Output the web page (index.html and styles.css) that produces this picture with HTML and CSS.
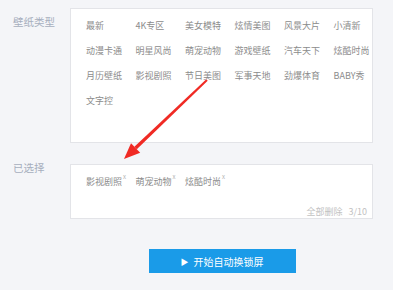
FILE: index.html
```html
<!DOCTYPE html>
<html>
<head>
    <meta charset="UTF-8">
    <title>壁纸设置</title>
    <link rel="stylesheet" href="styles.css">
</head>
<body>
    <div class="page">
        <div class="row">
            <div class="label label-top">壁纸类型</div>
            <div class="box type-box">
                <div class="grid">
                    <span>最新</span><span>4K专区</span><span>美女模特</span><span>炫情美图</span><span>风景大片</span><span>小清新</span>
                    <span>动漫卡通</span><span>明星风尚</span><span>萌宠动物</span><span>游戏壁纸</span><span>汽车天下</span><span>炫酷时尚</span>
                    <span>月历壁纸</span><span>影视剧照</span><span>节日美图</span><span>军事天地</span><span>劲爆体育</span><span>BABY秀</span>
                    <span>文字控</span>
                </div>
            </div>
        </div>

        <div class="row row-selected">
            <div class="label label-selected">已选择</div>
            <div class="box selected-box">
                <div class="grid">
                    <span>影视剧照<sup class="del">x</sup></span>
                    <span>萌宠动物<sup class="del">x</sup></span>
                    <span>炫酷时尚<sup class="del">x</sup></span>
                </div>
                <div class="selected-footer">
                    <span>全部删除</span>
                    <span>3/10</span>
                </div>
            </div>
        </div>

        <div class="actions">
            <button class="start-btn"><span class="play">&#9654;</span>开始自动换锁屏</button>
        </div>
    </div>

    <!-- annotation arrow -->
    <svg class="arrow" width="393" height="290" viewBox="0 0 393 290">
        <polygon points="206.3,79.3 207.7,80.7 136.8,149.3 134.4,146.7" fill="#f02a24"/>
        <polygon points="124,159 140.2,152.8 131,143.2" fill="#f02a24"/>
    </svg>
</body>
</html>
```

FILE: styles.css
```css
body {
    margin: 0;
    background-color: #f4f5f8;
    font-family: "Noto Sans CJK SC", "Noto Sans", sans-serif;
    color: #808080;
}
.page {
    padding-top: 8px;
    width: 393px;
    height: 282px;
}
.row {
    display: flex;
}
.row-selected {
    margin-top: 21px;
}
.label {
    width: 70px;
    box-sizing: border-box;
    padding-left: 13px;
    font-size: 10.5px;
    line-height: 14px;
    color: #a6aebd;
}
.label-top {
    margin-top: 7px;
}
.label-selected {
    margin-top: -3px;
}
.box {
    width: 303px;
    box-sizing: border-box;
    background-color: #ffffff;
    border: 1px solid #e3e4e8;
}
.type-box {
    height: 135px;
    padding: 4px 0 0 15px;
}
.selected-box {
    height: 55px;
    padding: 4px 5px 0 15px;
    display: flex;
    flex-direction: column;
    justify-content: space-between;
}
.grid {
    display: grid;
    grid-template-columns: repeat(6, 49.5px);
    font-size: 9px;
    line-height: 25px;
    white-space: nowrap;
    color: #8c8c8c;
}
.del {
    font-size: 6px;
    line-height: 0;
    color: #b0b0b0;
    margin-left: 1px;
    vertical-align: 6px;
}
.selected-footer {
    display: flex;
    justify-content: flex-end;
    gap: 6px;
    font-size: 9px;
    line-height: 12px;
    color: #c2c2c2;
}
.actions {
    margin-top: 30px;
    margin-left: 70px;
    width: 303px;
    display: flex;
    justify-content: center;
}
.start-btn {
    width: 147px;
    height: 24px;
    margin-left: 1px;
    border: none;
    padding: 0;
    background-color: #1a9be8;
    color: #ffffff;
    font-family: "Noto Sans CJK SC", "Noto Sans", sans-serif;
    font-size: 10px;
    display: flex;
    align-items: center;
    justify-content: center;
}
.play {
    font-size: 8px;
    margin-right: 5px;
}
.arrow {
    position: absolute;
    left: 0;
    top: 0;
    pointer-events: none;
}
```
